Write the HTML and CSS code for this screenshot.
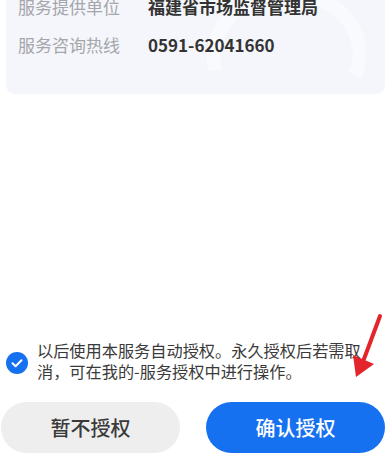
FILE: index.html
```html
<!DOCTYPE html>
<html lang="zh">
<head>
<meta charset="utf-8">
<link rel="stylesheet" href="styles.css">
</head>
<body>
<div class="page">
  <div class="card">
    <svg class="watermark" width="180" height="100" viewBox="0 0 180 100"><path d="M20 90 C 10 40, 60 5, 110 15 C 150 22, 175 60, 160 95" fill="none" stroke="#ffffff" stroke-width="14" opacity="0.45"/></svg>
    <div class="row"><span class="label">服务提供单位</span><span class="value">福建省市场监督管理局</span></div>
    <div class="row"><span class="label">服务咨询热线</span><span class="value">0591-62041660</span></div>
  </div>
  <div class="spacer"></div>
  <div class="agree">
    <span class="check"><svg width="22" height="22" viewBox="0 0 22 22"><circle cx="11" cy="11" r="11" fill="#1671f0"/><path d="M6.5 11.2 L9.6 14.2 L15.5 8.2" fill="none" stroke="#fff" stroke-width="2" stroke-linecap="round" stroke-linejoin="round"/></svg></span>
    <p class="agree-text">以后使用本服务自动授权。永久授权后若需取消，可在我的-服务授权中进行操作。</p>
  </div>
  <div class="buttons">
    <button class="btn btn-gray">暂不授权</button>
    <button class="btn btn-blue">确认授权</button>
  </div>
  <svg class="arrow" width="40" height="70" viewBox="0 0 40 70"><line x1="37" y1="5" x2="21" y2="48" stroke="#e3242b" stroke-width="4" stroke-linecap="round"/><polygon points="13,66 10,44 31,53" fill="#e3242b"/></svg>
</div>
</body>
</html>
```
FILE: styles.css
```css
html, body { margin: 0; padding: 0; background: #fff; }
body { font-family: "Noto Sans CJK SC", "Noto Sans", sans-serif; }
.page {
  position: relative;
  height: 458px;
  display: flex;
  flex-direction: column;
  overflow: hidden;
}
.card {
  position: relative;
  margin: -25px 5px 0 6px;
  padding: 12px 12px 31px 12px;
  background: #f4f6fb;
  border-radius: 9px;
  overflow: hidden;
}
.watermark { position: absolute; right: 10px; top: 5px; }
.row {
  position: relative;
  display: flex;
  align-items: center;
  height: 38px;
  font-size: 17px;
}
.label { color: #a4a6aa; width: 130px; }
.value { color: #333; font-weight: 700; }
.spacer { flex: 1; }
.agree {
  display: flex;
  align-items: center;
  padding: 0 10px 0 6px;
  margin-bottom: 20px;
}
.check { display: flex; width: 22px; height: 22px; flex: none; margin-top: 3px; }
.agree-text {
  margin: 0 0 0 9px;
  width: 332px;
  font-size: 16.2px;
  line-height: 21px;
  color: #3a3a3a;
}
.buttons {
  display: grid;
  grid-template-columns: 1fr 1fr;
  gap: 26px;
  padding: 0 5px 5px 1px;
}
.btn {
  height: 51px;
  border: none;
  border-radius: 26px;
  font-family: "Noto Sans CJK SC", sans-serif;
  font-size: 20px;
  font-weight: 500;
}
.btn-gray { background: #eeeeee; color: #3a3a3a; }
.btn-blue { background: #1671f0; color: #fff; }
.arrow { position: absolute; left: 343px; top: 311px; }
```
